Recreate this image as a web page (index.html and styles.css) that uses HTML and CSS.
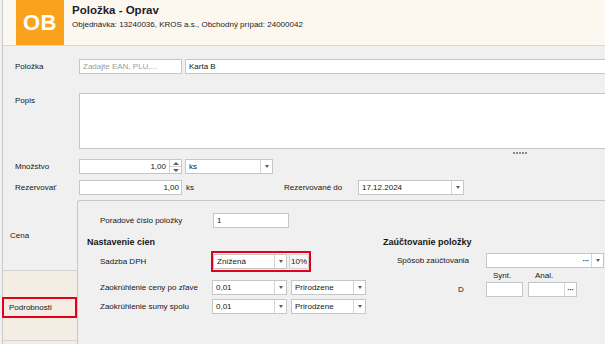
FILE: index.html
```html
<!DOCTYPE html>
<html lang="sk">
<head>
<meta charset="utf-8">
<title>Položka - Oprav</title>
<link rel="stylesheet" href="styles.css">
</head>
<body>
<div class="frame">
  <header class="head">
    <div class="logo">OB</div>
    <div class="titles">
      <div class="title">Položka - Oprav</div>
      <div class="subtitle">Objednávka: 13240036, KROS a.s., Obchodný prípad: 24000042</div>
    </div>
  </header>

  <section class="form">
    <div class="row r-item">
      <span class="lbl">Položka</span>
      <div class="field w103 placeholder">Zadajte EAN, PLU,...</div>
      <div class="field grow gap3">Karta B</div>
    </div>

    <div class="row r-desc">
      <span class="lbl lbl-top">Popis</span>
      <div class="field grow area"></div>
    </div>

    <div class="grip"><span class="dots"></span></div>

    <div class="row r-qty">
      <span class="lbl">Množstvo</span>
      <div class="field w103 num">
        <span class="val-r">1,00</span>
        <span class="spin"><span class="up"></span><span class="down"></span></span>
      </div>
      <div class="field select w88 gap3">
        <span class="val">ks</span>
        <span class="drop"></span>
      </div>
    </div>

    <div class="row r-res">
      <span class="lbl">Rezervovať</span>
      <div class="field w103 num plain">
        <span class="val-r">1,00</span>
      </div>
      <span class="unit">ks</span>
      <span class="lbl-res">Rezervované do</span>
      <div class="field select w106">
        <span class="val">17.12.2024</span>
        <span class="drop"></span>
      </div>
    </div>
  </section>

  <section class="bottom">
    <nav class="tabs">
      <div class="tab tab-cena">Cena</div>
      <div class="tab tab-pod">
        <div class="redbox-tab">Podrobnosti</div>
      </div>
      <div class="tab tab-next"></div>
    </nav>

    <div class="panel">
      <div class="prow pr-order">
        <span class="plbl w113">Poradové číslo položky</span>
        <div class="field w76">1</div>
      </div>

      <div class="cols">
        <div class="col col-left">
          <div class="heading">Nastavenie cien</div>

          <div class="prow pr-vat">
            <span class="plbl w111">Sadzba DPH</span>
            <div class="redbox">
              <div class="field select w74">
                <span class="val">Znížená</span>
                <span class="drop"></span>
              </div>
              <div class="pct">10%</div>
            </div>
          </div>

          <div class="prow pr-r1">
            <span class="plbl w112">Zaokrúhlenie ceny po zľave</span>
            <div class="field select w75">
              <span class="val">0,01</span>
              <span class="drop"></span>
            </div>
            <div class="field select w75 gap4">
              <span class="val">Prirodzene</span>
              <span class="drop"></span>
            </div>
          </div>

          <div class="prow pr-r2">
            <span class="plbl w112">Zaokrúhlenie sumy spolu</span>
            <div class="field select w75">
              <span class="val">0,01</span>
              <span class="drop"></span>
            </div>
            <div class="field select w75 gap4">
              <span class="val">Prirodzene</span>
              <span class="drop"></span>
            </div>
          </div>
        </div>

        <div class="col col-right">
          <div class="heading">Zaúčtovanie položky</div>

          <div class="prow pr-way">
            <span class="plbl w89">Spôsob zaúčtovania</span>
            <div class="field select w118">
              <span class="val"></span>
              <span class="ell">···</span>
              <span class="drop"></span>
            </div>
          </div>

          <div class="acc-labels">
            <span class="synt">Synt.</span>
            <span class="anal">Anal.</span>
          </div>

          <div class="prow pr-d">
            <span class="plbl w28">D</span>
            <div class="field w37"></div>
            <div class="field select w49 gap5">
              <span class="val"></span>
              <span class="btn">···</span>
            </div>
          </div>
        </div>
      </div>
    </div>
  </section>
</div>
</body>
</html>
```

FILE: styles.css
```css
* { box-sizing: border-box; }

html, body {
  margin: 0;
  padding: 0;
}

body {
  width: 605px;
  height: 344px;
  overflow: hidden;
  background: #f0f0f0;
  font-family: "Liberation Sans", Arial, sans-serif;
  font-size: 8px;
  color: #161616;
}

.frame {
  margin-left: 2px;
  width: 640px;
  height: 344px;
  border-left: 1px solid #c9c9c9;
}

/* header */
.head {
  height: 46px;
  display: flex;
  padding-left: 13px;
  background: #fdf8ef;
  border-bottom: 1px solid #d6d6d6;
}

.logo {
  width: 48px;
  height: 45px;
  flex: none;
  display: flex;
  align-items: center;
  justify-content: center;
  background: #fba21c;
  color: #fff;
  font-weight: bold;
  font-size: 22px;
  letter-spacing: 0.5px;
}

.titles {
  padding: 4px 0 0 8px;
}

.title {
  font-size: 11.5px;
  line-height: 12px;
  font-weight: bold;
  color: #1d1d2c;
}

.subtitle {
  margin-top: 4px;
  line-height: 10px;
  color: #222;
}

/* top form */
.form {
  padding-left: 12px;
}

.row {
  display: flex;
  align-items: center;
  height: 15px;
}

.lbl {
  width: 64px;
  flex: none;
}

.field {
  height: 15px;
  flex: none;
  display: flex;
  align-items: center;
  padding: 0 3px;
  background: #fff;
  border: 1px solid #c6c6c6;
  white-space: nowrap;
}

.grow { flex: 1; }
.gap3 { margin-left: 3px; }
.gap4 { margin-left: 4px; }
.gap5 { margin-left: 5px; }

.w28 { width: 28px; }
.w37 { width: 37px; }
.w49 { width: 49px; }
.w74 { width: 74px; }
.w75 { width: 75px; }
.w76 { width: 76px; }
.w88 { width: 88px; }
.w89 { width: 89px; }
.w103 { width: 103px; }
.w106 { width: 106px; }
.w111 { width: 111px; }
.w112 { width: 112px; }
.w113 { width: 113px; }
.w118 { width: 118px; }

.placeholder { color: #9b9b9b; }

.r-item { margin-top: 13px; }

.r-desc {
  margin-top: 19px;
  height: 56px;
  align-items: flex-start;
}

.lbl-top { padding-top: 3px; }

.area { height: 56px; }

.grip {
  height: 10px;
  padding: 3px 0 0 498px;
}

.dots {
  display: block;
  width: 14px;
  height: 2px;
  background: repeating-linear-gradient(to right, #8c8c8c 0 2px, transparent 2px 3px);
}

.num {
  justify-content: flex-end;
  padding: 0;
}

.val-r { padding-right: 3px; }
.plain .val-r { padding-right: 2px; }

.spin {
  width: 12px;
  height: 13px;
  display: flex;
  flex-direction: column;
  border-left: 1px solid #cfcfcf;
}

.spin .up,
.spin .down {
  flex: 1;
  display: flex;
  align-items: center;
  justify-content: center;
}

.spin .up { border-bottom: 1px solid #cfcfcf; }

.spin .up::after {
  content: "";
  border-left: 3px solid transparent;
  border-right: 3px solid transparent;
  border-bottom: 3px solid #5e5e5e;
}

.spin .down::after {
  content: "";
  border-left: 3px solid transparent;
  border-right: 3px solid transparent;
  border-top: 3px solid #5e5e5e;
}

.select { padding: 0; }

.select .val {
  flex: 1;
  padding-left: 3px;
  overflow: hidden;
}

.drop {
  width: 12px;
  height: 13px;
  flex: none;
  display: flex;
  align-items: center;
  justify-content: center;
  border-left: 1px solid #d6d6d6;
}

.drop::after {
  content: "";
  border-left: 2.5px solid transparent;
  border-right: 2.5px solid transparent;
  border-top: 3px solid #5e5e5e;
}

.r-res { margin-top: 6px; }

.unit {
  width: 102px;
  flex: none;
  padding-left: 4px;
}

.lbl-res {
  width: 74px;
  flex: none;
}

/* bottom area */
.bottom {
  margin-top: 5px;
  height: 144px;
  display: flex;
}

.tabs {
  width: 74px;
  flex: none;
  display: flex;
  flex-direction: column;
}

.tab-cena {
  height: 70px;
  display: flex;
  align-items: center;
  padding-left: 7px;
}

.tab-pod {
  height: 70px;
  padding-top: 26px;
  background: #f3ede4;
  border-top: 1px solid #d3d3d3;
}

.redbox-tab {
  margin-left: -1px;
  width: 75px;
  height: 21px;
  display: flex;
  align-items: center;
  padding-left: 5px;
  border: 2px solid #e2001a;
}

.tab-next {
  flex: 1;
  background: #f3ede4;
  border-top: 1px solid #d3d3d3;
}

.panel {
  flex: 1;
  padding-left: 9px;
  border-top: 1px solid #c8c8c8;
  border-left: 1px solid #c8c8c8;
  border-top-left-radius: 3px;
}

.prow {
  display: flex;
  align-items: center;
  height: 15px;
}

.plbl { flex: none; }

.pr-order {
  margin-top: 12px;
  padding-left: 13px;
}

.cols {
  display: flex;
}

.col-left {
  width: 296px;
  flex: none;
}

.heading {
  margin-top: 9px;
  height: 11px;
  line-height: 11px;
  font-size: 9px;
  font-weight: bold;
}

.col-left .prow { padding-left: 13px; }

.pr-vat {
  margin-top: 3px;
  height: 21px;
}

.redbox {
  display: flex;
  align-items: center;
  height: 21px;
  padding: 1px 0;
  border: 2px solid #e2001a;
}

.pct {
  width: 20px;
  height: 15px;
  margin-left: 2px;
  display: flex;
  align-items: center;
  justify-content: center;
  background: #f6f6f6;
  border: 1px solid #d2d2d2;
}

.pr-r1 { margin-top: 8px; }
.pr-r2 { margin-top: 4px; }

.pr-way {
  margin-top: 5px;
  padding-left: 14px;
}

.ell {
  padding-right: 2px;
  font-weight: bold;
  letter-spacing: -0.5px;
  color: #333;
}

.acc-labels {
  display: flex;
  height: 9px;
  line-height: 9px;
  margin-top: 3px;
  padding-left: 110px;
}

.synt { width: 42px; }

.pr-d {
  margin-top: 2px;
  padding-left: 75px;
}

.btn {
  width: 12px;
  height: 13px;
  flex: none;
  display: flex;
  align-items: center;
  justify-content: center;
  border-left: 1px solid #d6d6d6;
  font-weight: bold;
  letter-spacing: -0.5px;
  color: #333;
}
```
